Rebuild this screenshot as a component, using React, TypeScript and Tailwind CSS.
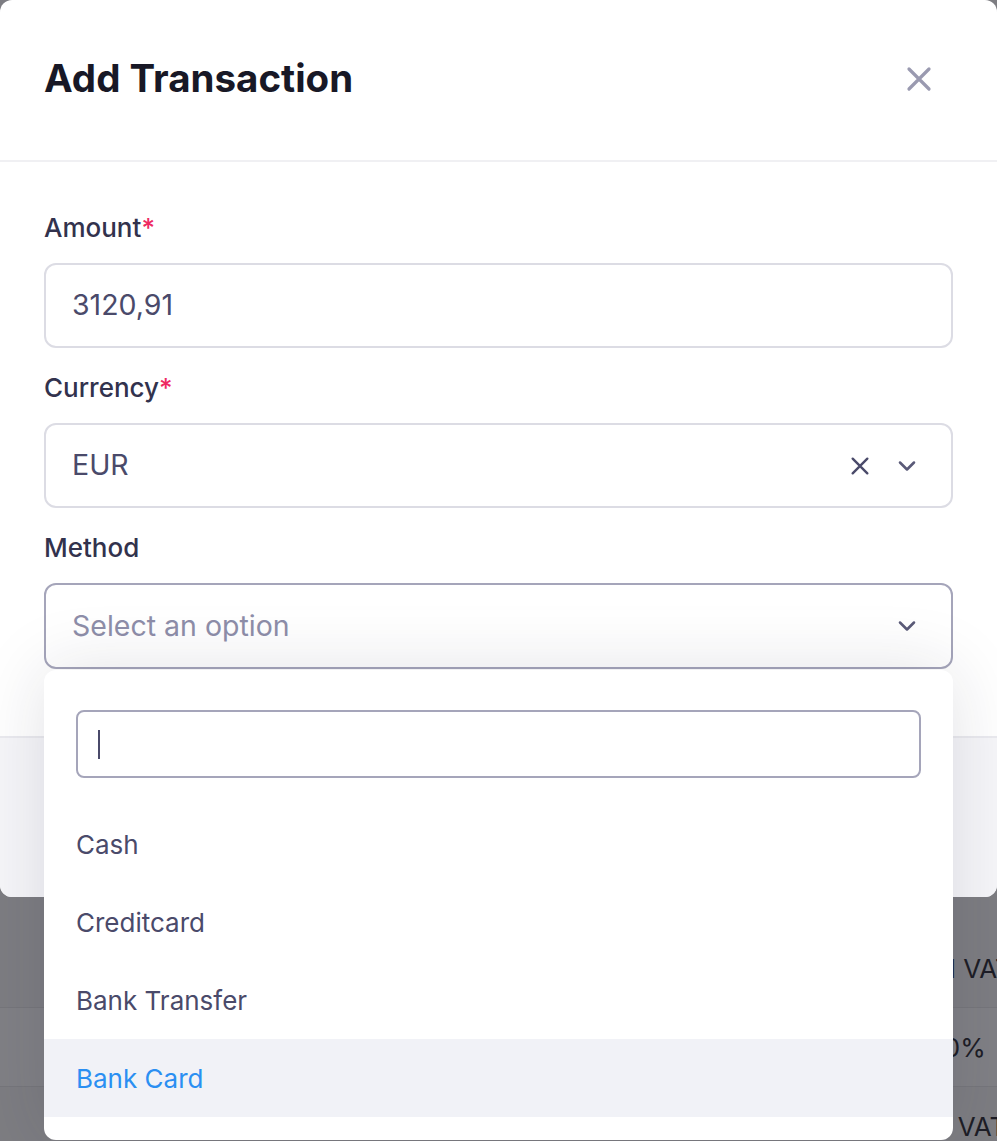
import { ChevronDown } from 'lucide-react';

type Option = { label: string; active?: boolean };

const methods: Option[] = [
  { label: 'Cash' },
  { label: 'Creditcard' },
  { label: 'Bank Transfer' },
  { label: 'Bank Card', active: true },
];

function CloseIcon({ size, className }: { size: number; className?: string }) {
  return (
    <svg width={size} height={size} viewBox="0 0 24 24" fill="none" className={className}>
      <path d="M4 4L20 20M20 4L4 20" stroke="currentColor" strokeWidth="2.6" strokeLinecap="round" />
    </svg>
  );
}

function Label({ text, required }: { text: string; required?: boolean }) {
  return (
    <div className="mb-[18px] h-[34px] text-[26px] leading-[34px] font-medium text-[#32324d]">
      {text}
      {required && <span className="text-[#ee2a62]">*</span>}
    </div>
  );
}

export default function App() {
  return (
    <div className="relative h-[1141px] w-[997px] overflow-hidden bg-[#7d7d82] font-['Inter',sans-serif]">
      {/* page behind the overlay */}
      <div className="absolute inset-x-0 top-[929px] flex flex-col text-[26px] whitespace-nowrap text-[#1d1d26]">
        <div className="flex h-[79px] items-center border-b border-[#76767b] pl-[896px]">Total VAT</div>
        <div className="flex h-[79px] items-center border-b border-[#76767b] bg-[#808085] pl-[928px]">20%</div>
        <div className="flex h-[79px] items-center pl-[900px]">Excl VAT</div>
      </div>

      {/* modal */}
      <div className="relative flex h-[897px] flex-col rounded-[12px] bg-white">
        <div className="flex h-[162px] shrink-0 items-center justify-between border-b-2 border-[#f0f0f3] px-[44px] pb-[2px]">
          <h2 className="text-[38.5px] font-bold text-[#181826]">Add Transaction</h2>
          <CloseIcon size={30} className="mr-[19px] text-[#9a9ab0]" />
        </div>

        <div className="flex flex-col gap-[23px] px-[44px] pt-[49px] pb-[67px]">
          <div>
            <Label text="Amount" required />
            <div className="flex h-[85px] items-center rounded-[12px] border-2 border-[#dcdce4] px-[26px] text-[28.5px] text-[#4a4a6a]">
              3120,91
            </div>
          </div>

          <div>
            <Label text="Currency" required />
            <div className="flex h-[85px] items-center justify-between rounded-[12px] border-2 border-[#dcdce4] pr-[30px] pl-[26px] text-[28.5px] text-[#4a4a6a]">
              <span>EUR</span>
              <div className="flex items-center gap-[22px]">
                <CloseIcon size={22} className="text-[#4a4a6a]" />
                <ChevronDown size={28} strokeWidth={2.2} className="text-[#5a5a78]" />
              </div>
            </div>
          </div>

          <div className="relative">
            <Label text="Method" />
            <div className="flex h-[86px] items-center justify-between rounded-[12px] border-2 border-[#a5a5ba] pr-[30px] pl-[26px] text-[28.5px] text-[#8e8ea9]">
              <span>Select an option</span>
              <ChevronDown size={28} strokeWidth={2.2} className="text-[#5a5a78]" />
            </div>

            {/* dropdown popover */}
            <div className="absolute top-[calc(100%+1px)] right-0 left-0 z-10 h-[470px] rounded-[12px] bg-white px-[32px] pt-[40px] shadow-[0_0_70px_rgba(33,33,52,0.13)]">
              <div className="flex h-[68px] items-center rounded-[8px] border-2 border-[#a5a5ba] px-[20px]">
                <span className="h-[29px] w-[2px] bg-[#4a4a6a]" />
              </div>
              <ul className="-mx-[32px] mt-[27px]">
                {methods.map((m) => (
                  <li
                    key={m.label}
                    className={`flex h-[78px] items-center px-[32px] text-[26px] ${
                      m.active ? 'bg-[#f1f2f7] text-[#2b8ff2]' : 'text-[#4a4a6a]'
                    }`}
                  >
                    {m.label}
                  </li>
                ))}
              </ul>
            </div>
          </div>
        </div>

        <div className="flex-1 rounded-b-[12px] border-t-2 border-[#eaeaef] bg-[#f6f6f9]" />
      </div>
    </div>
  );
}
